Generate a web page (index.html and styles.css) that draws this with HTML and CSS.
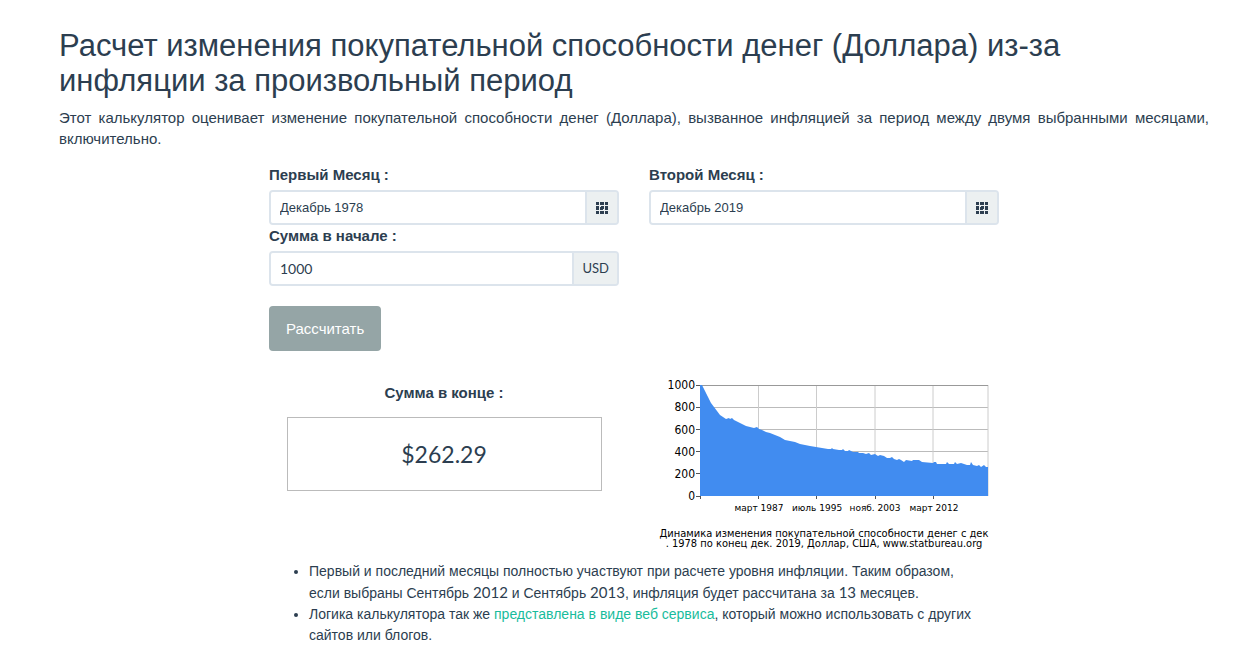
FILE: index.html
```html
<!DOCTYPE html>
<html lang="ru">
<head>
<meta charset="utf-8">
<title>Калькулятор инфляции</title>
<link rel="stylesheet" href="styles.css">
</head>
<body>
<main class="page">
  <h1 class="title">Расчет изменения покупательной способности денег (Доллара) из-за инфляции за произвольный период</h1>
  <p class="intro">Этот калькулятор оценивает изменение покупательной способности денег (Доллара), вызванное инфляцией за период между двумя выбранными месяцами, включительно.</p>
  <div class="calculator">
    <form class="fields">
      <div class="field">
        <label class="label" for="first">Первый Месяц :</label>
        <div class="group">
          <input class="input" id="first" type="text" value="Декабрь 1978">
          <button class="addon" type="button" aria-label="Выбрать первый месяц">
            <svg class="grid-icon" viewBox="0 0 12 12" shape-rendering="crispEdges"><path d="M0 0h3v3H0zM4 0h4v3H4zM9 0h3v3H9zM0 4h3v4H0zM9 4h3v4H9zM0 9h3v3H0zM4 9h4v3H4zM9 9h3v3H9zM5 4h3v3H7v1H4V5h1z"/></svg>
          </button>
        </div>
      </div>
      <div class="field">
        <label class="label" for="second">Второй Месяц :</label>
        <div class="group">
          <input class="input" id="second" type="text" value="Декабрь 2019">
          <button class="addon" type="button" aria-label="Выбрать второй месяц">
            <svg class="grid-icon" viewBox="0 0 12 12" shape-rendering="crispEdges"><path d="M0 0h3v3H0zM4 0h4v3H4zM9 0h3v3H9zM0 4h3v4H0zM9 4h3v4H9zM0 9h3v3H0zM4 9h4v3H4zM9 9h3v3H9zM5 4h3v3H7v1H4V5h1z"/></svg>
          </button>
        </div>
      </div>
      <div class="field">
        <label class="label" for="amount">Сумма в начале :</label>
        <div class="group">
          <input class="input amount" id="amount" type="text" value="1000">
          <span class="addon lato">USD</span>
        </div>
      </div>
      <button class="submit" type="submit">Рассчитать</button>
    </form>
    <div class="results">
      <section class="result">
        <h2 class="label">Сумма в конце :</h2>
        <output class="sum lato">$262.29</output>
      </section>
      <svg class="chart" viewBox="0 0 330 176" role="img" aria-label="Динамика изменения покупательной способности">
        <g class="grid">
          <path d="M41 33.500H329M41 55.500H329M41 77.500H329M41 99.500H329"/>
          <path class="grid-soft" d="M99.500 11V122M157.500 11V122M216 11V122M274 11V122M329 11V122"/>
          <path class="grid-top" d="M41 11.500H329"/>
        </g>
        <path class="area" d="M41 122V11H43L46 17L49 23L52 29L55 33L58 37L61 41L64 43L67 45L70 44L71 45L73 44L75 46L79 48L83 50L87 52L91 53L95 54L98 53L100 55L103 56L107 58L111 59L116 61L121 63L126 66L131 67L136 68L141 70L146 71L151 72L157 73L163 74L169 75L172 75L173 74L174 75L180 76L183 76L184 75L186 77L189 77L190 76L194 78L199 78L200 79L204 79L207 80L210 79L212 81L216 80L219 82L221 81L225 82L228 84L231 84L233 83L235 85L238 86L240 85L242 86L245 88L247 86L253 87L254 86L260 86L263 88L274 89L275 88L277 88L278 90L287 90L288 88L290 90L295 90L296 88L298 90L302 89L308 91L311 91L312 88L314 91L318 92L320 91L322 93L325 91L327 93H329V122z"/>
        <path class="axis" d="M37 11.500h4M37 33.500h4M37 55.500h4M37 77.500h4M37 99.500h4M37 122.500h4M41.500 122v3M99.500 122v3M157.500 122v3M216.500 122v3M274.500 122v3"/>
        <g class="y-text">
          <text x="36" y="15">1000</text><text x="36" y="37">800</text><text x="36" y="60">600</text>
          <text x="36" y="82">400</text><text x="36" y="104">200</text><text x="36" y="126">0</text>
        </g>
        <g class="x-text">
          <text x="100" y="137">март 1987</text><text x="158" y="137">июль 1995</text>
          <text x="216" y="137">нояб. 2003</text><text x="275" y="137">март 2012</text>
        </g>
        <g class="caption">
          <text x="165" y="163">Динамика изменения покупательной способности денег с дек</text>
          <text x="165" y="173">. 1978 по конец дек. 2019, Доллар, США, www.statbureau.org</text>
        </g>
      </svg>
    </div>
    <ul class="notes">
      <li>Первый и последний месяцы полностью участвуют при расчете уровня инфляции. Таким образом, если выбраны Сентябрь <span class="digits">2012</span> и Сентябрь <span class="digits">2013</span>, инфляция будет рассчитана за <span class="digits">13</span> месяцев.</li>
      <li>Логика калькулятора так же <a class="link" href="#">представлена в виде веб сервиса</a>, который можно использовать с других сайтов или блогов.</li>
    </ul>
  </div>
</main>
</body>
</html>
```
FILE: styles.css
```css
* { box-sizing: border-box; }
body {
  margin: 0;
  background: #fff;
  color: #2c3e50;
  font: 15px/21px "Liberation Sans", Arial, sans-serif;
}
.page { padding: 28px 27px 12px 59px; }
.title { margin: 0 0 9px; font-size: 31px; line-height: 35px; font-weight: 400; }
.intro { margin: 0 0 15px; text-align: justify; }
.calculator { max-width: 730px; margin: 0 auto; }
.fields { display: grid; grid-template-columns: 1fr 1fr; column-gap: 30px; }
.label { display: block; margin: 0 0 5px; font-size: 15px; line-height: 21px; font-weight: 700; }
.group {
  display: flex;
  height: 35px;
  border: 2px solid #dce4ec;
  border-radius: 4px;
  background: #ecf0f1;
  overflow: hidden;
}
.input {
  flex: 1;
  min-width: 0;
  padding: 0 9px;
  border: 0;
  border-right: 2px solid #dce4ec;
  background: #fff;
  color: inherit;
  font-family: inherit;
  font-size: 13px;
}
.amount { font-family: Lato, sans-serif; font-size: 14px; }
.addon {
  display: flex;
  align-items: center;
  padding: 0 8px;
  border: 0;
  background: #ecf0f1;
  color: inherit;
  font-size: 13px;
}
.lato { font-family: Lato, sans-serif; }
.digits { font-family: Lato, sans-serif; font-size: 15px; }
.grid-icon { width: 12px; height: 12px; margin: 0 1px; fill: #2c3e50; }
.submit {
  grid-column: 1;
  justify-self: start;
  height: 45px;
  margin-top: 20px;
  padding: 0 17px;
  border: 0;
  border-radius: 4px;
  background: #95a5a6;
  color: #fff;
  font: inherit;
}
.results {
  display: grid;
  grid-template-columns: 1fr 1fr;
  column-gap: 30px;
  margin-top: 23px;
}
.result { padding-top: 8px; text-align: center; }
.sum {
  display: block;
  width: 90%;
  margin: 14px auto 0;
  padding: 20px 0;
  border: 1px solid #bbb;
  font-size: 23px;
  line-height: 32px;
}
.chart { width: 330px; height: 176px; margin-left: 10px; font-family: "DejaVu Sans", sans-serif; }
.grid { fill: none; stroke: #bbb; }
.grid-soft { stroke: #ccc; }
.grid-top { stroke: #999; }
.area { fill: #418cf0; }
.axis { fill: none; stroke: #555; }
.y-text { font-family: "DejaVu Sans Condensed", "DejaVu Sans", sans-serif; font-size: 12px; text-anchor: end; }
.x-text { font-size: 9px; text-anchor: middle; }
.caption { font-family: "DejaVu Sans Condensed", "DejaVu Sans", sans-serif; font-size: 11px; text-anchor: middle; }
.notes { margin: 11px 0 0; padding: 0 15px 0 40px; font-size: 14px; }
.link { color: #18bc9c; text-decoration: none; }
```
